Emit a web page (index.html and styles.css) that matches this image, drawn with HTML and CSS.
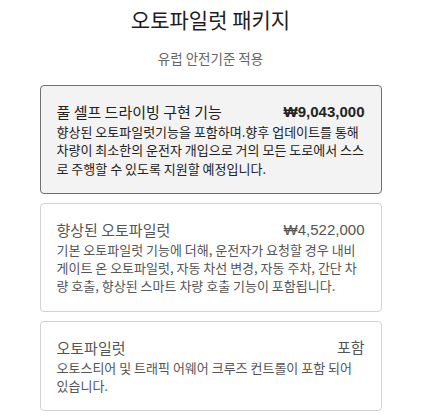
FILE: index.html
```html
<!DOCTYPE html>
<html>
<head>
	<meta charset="utf-8">
	<meta name="viewport" content="width=device-width, initial-scale=1">
	<title>오토파일럿 패키지</title>
	<link rel="stylesheet" href="styles.css">
</head>
<body>
	<div class="package">
		<h1 class="package-title">오토파일럿 패키지</h1>
		<p class="package-sub">유럽 안전기준 적용</p>

		<div class="option selected">
			<div class="option-head">
				<span class="option-name">풀 셀프 드라이빙 구현 기능</span>
				<span class="option-price">₩9,043,000</span>
			</div>
			<p class="option-desc">향상된 오토파일럿기능을 포함하며.향후 업데이트를 통해 차량이 최소한의 운전자 개입으로 거의 모든 도로에서 스스로 주행할 수 있도록 지원할 예정입니다.</p>
		</div>

		<div class="option">
			<div class="option-head">
				<span class="option-name">향상된 오토파일럿</span>
				<span class="option-price">₩4,522,000</span>
			</div>
			<p class="option-desc">기본 오토파일럿 기능에 더해, 운전자가 요청할 경우 내비게이트 온 오토파일럿, 자동 차선 변경, 자동 주차, 간단 차량 호출, 향상된 스마트 차량 호출 기능이 포함됩니다.</p>
		</div>

		<div class="option">
			<div class="option-head">
				<span class="option-name">오토파일럿</span>
				<span class="option-price">포함</span>
			</div>
			<p class="option-desc">오토스티어 및 트래픽 어웨어 크루즈 컨트롤이 포함 되어 있습니다.</p>
		</div>
	</div>
</body>
</html>
```

FILE: styles.css
```css
* {
	margin: 0px;
	padding: 0px;
	box-sizing: border-box;
}

body {
	background: #fff;
	font-family: "Noto Sans CJK KR", "Noto Sans", sans-serif;
	color: #222;
}

.package {
	width: 342px;
	margin: 0 auto;
	display: flex;
	flex-direction: column;
	gap: 9px;
}

.package-title {
	margin-top: 5px;
	font-size: 21px;
	font-weight: normal;
	line-height: 28px;
	text-align: center;
	color: #1e1e1e;
}

.package-sub {
	margin-top: 6px;
	margin-bottom: 8px;
	font-size: 13.5px;
	line-height: 20px;
	text-align: center;
	color: #666;
}

.option {
	border: 1px solid #d2d2d2;
	border-radius: 4px;
	padding: 16px 16px 15px 16px;
	color: #555;
	cursor: pointer;
}

.option.selected {
	border-color: #707070;
	background-color: #f3f3f3;
	color: #222;
}

.option-head {
	display: flex;
	justify-content: space-between;
	align-items: center;
	line-height: 20px;
	margin-bottom: 1px;
	font-size: 15px;
}

.option-price {
	font-family: "Liberation Sans", "Noto Sans CJK KR", sans-serif;
	font-size: 15px;
}

.selected .option-price {
	font-weight: bold;
}

.option-desc {
	font-size: 13px;
	line-height: 18.3px;
}
```
